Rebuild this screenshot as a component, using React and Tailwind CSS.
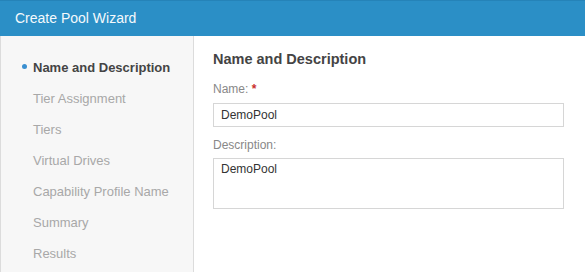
export default function App() {
  const steps = [
    "Tier Assignment",
    "Tiers",
    "Virtual Drives",
    "Capability Profile Name",
    "Summary",
    "Results",
  ];
  return (
    <div className="w-[585px] h-[272px] overflow-hidden bg-white flex flex-col" style={{ fontFamily: '"Liberation Sans", Arial, sans-serif' }}>
      <div className="h-[36px] shrink-0 bg-[#2b8fc6] border-t border-[#2583b8] flex items-center pl-[15px] text-[#f4f9fc] text-[14px]">
        Create Pool Wizard
      </div>
      <div className="flex flex-1 min-h-0">
        <div className="w-[194px] shrink-0 bg-[#f7f7f7] border-l border-r border-[#dcdcdc] pt-[16px] flex flex-col">
          <div className="h-[31px] flex items-center pl-[21px] text-[13px] font-bold text-[#444]">
            <span className="w-[5px] h-[5px] rounded-full bg-[#3a8fd0] mr-[6px] -mt-[3px]"></span>
            Name and Description
          </div>
          {steps.map((s) => (
            <div key={s} className="h-[31px] flex items-center pl-[32px] text-[13px] text-[#a8a8a8]">
              {s}
            </div>
          ))}
        </div>
        <div className="flex-1 pl-[19px] pr-[20px] pt-[13px] flex flex-col">
          <div className="h-[20px] leading-[20px] text-[14.5px] font-bold text-[#444]">Name and Description</div>
          <div className="mt-[12px] h-[16px] leading-[16px] text-[12px] text-[#888]">
            Name: <span className="text-[#c9302c] font-bold">*</span>
          </div>
          <div className="mt-[6px] h-[24px] w-[351px] border border-[#d6d6d6] flex items-center pl-[7px] text-[12px] text-[#333]">
            DemoPool
          </div>
          <div className="mt-[10px] h-[16px] leading-[16px] text-[12px] text-[#888]">Description:</div>
          <div className="mt-[5px] h-[51px] w-[351px] border border-[#d6d6d6] pl-[7px] pt-[3px] text-[12px] leading-[15px] text-[#333]">
            DemoPool
          </div>
        </div>
      </div>
    </div>
  );
}
